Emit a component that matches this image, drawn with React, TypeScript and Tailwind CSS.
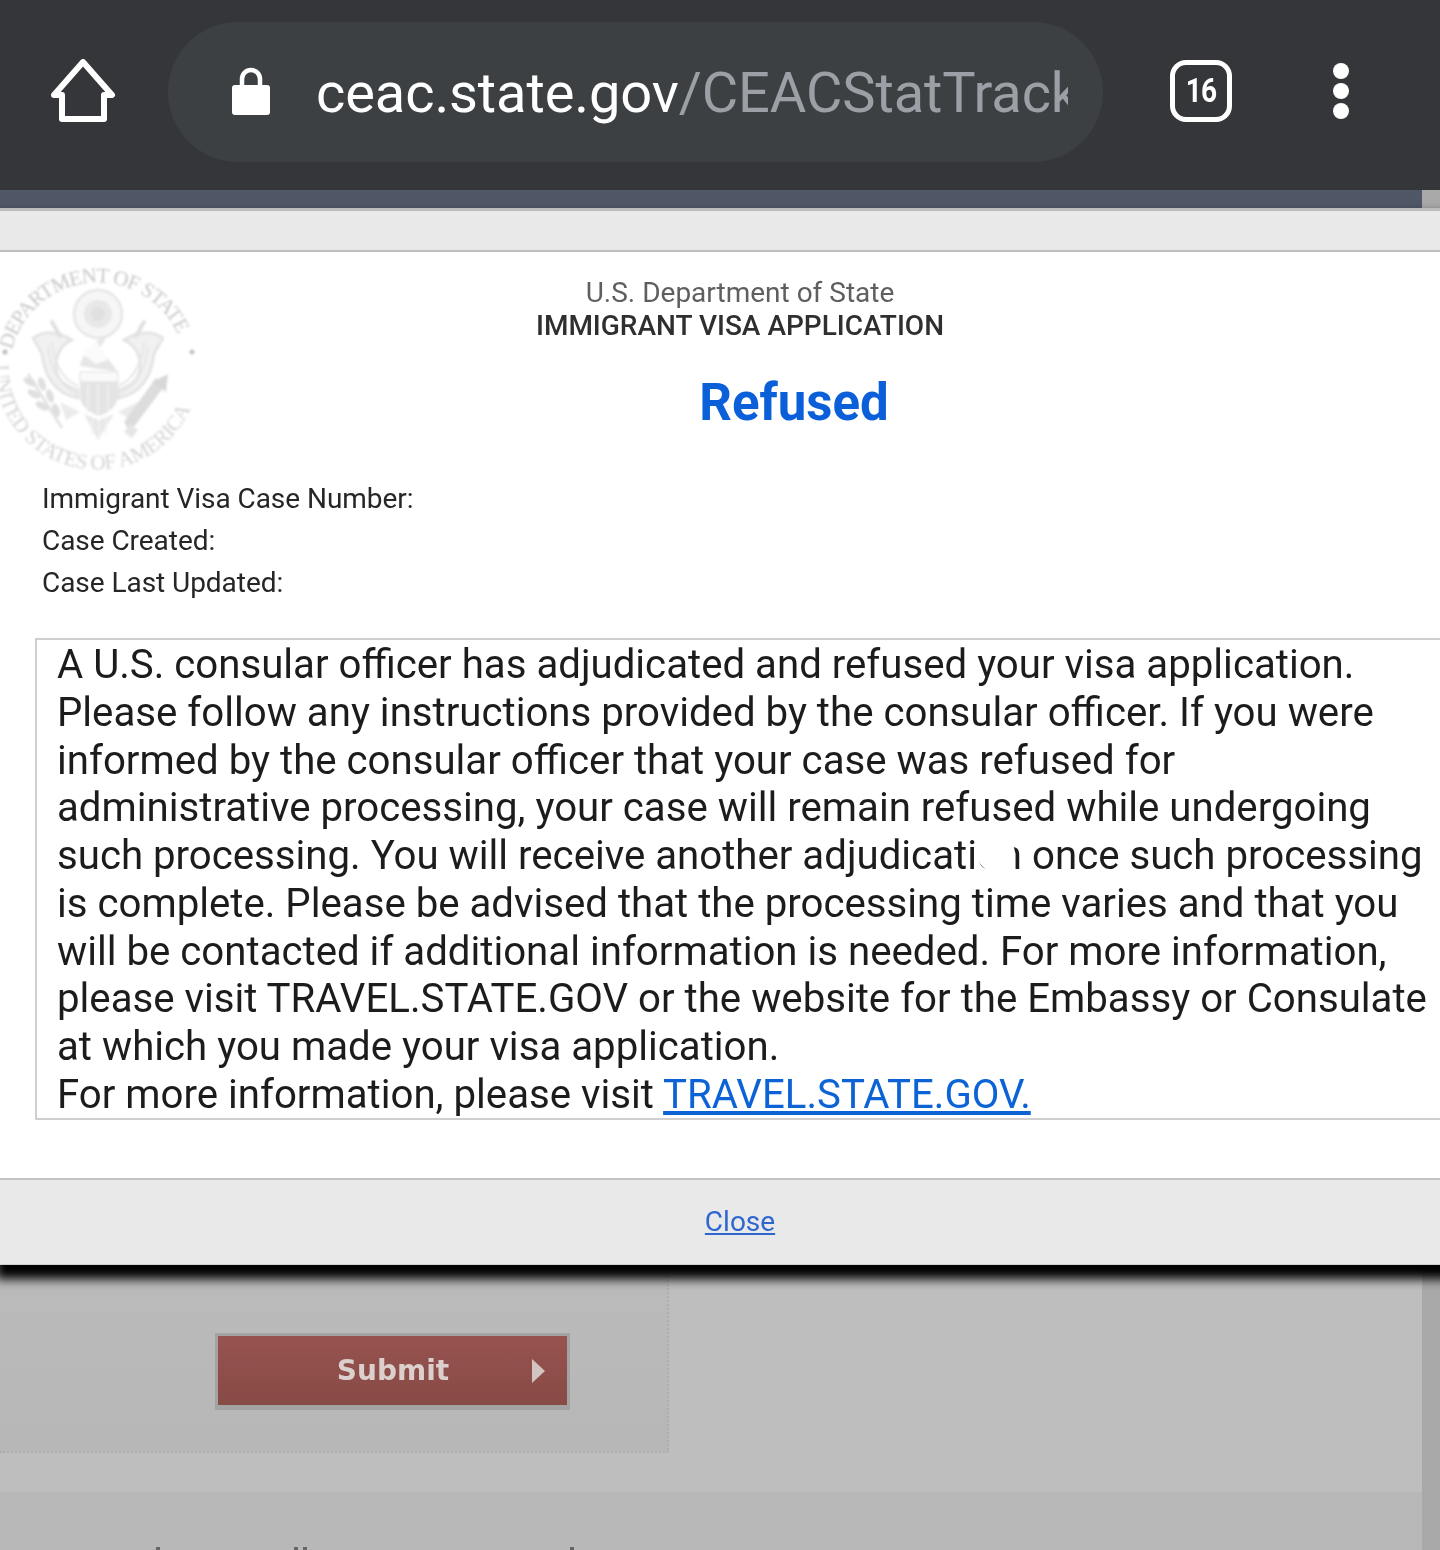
import React from "react";

const roboto = "font-['Roboto',sans-serif]";

function Seal() {
  return (
    <svg width="204" height="212" viewBox="0 0 204 212" className="blur-[0.8px]">
      <defs>
        <path id="topArc" d="M 12 88 A 88 88 0 0 1 184 92" fill="none" />
        <path id="botArc" d="M -5 103 A 102 102 0 0 0 199 108" fill="none" />
      </defs>
      <text fill="#c8c8c8" fontFamily="Liberation Serif" fontSize="21" letterSpacing="-1">
        <textPath href="#topArc">DEPARTMENT OF STATE</textPath>
      </text>
      <text fill="#d4d4d4" fontFamily="Liberation Serif" fontSize="21" letterSpacing="-0.4">
        <textPath href="#botArc">UNITED STATES OF AMERICA</textPath>
      </text>
      <circle cx="5" cy="90" r="2.5" fill="#bdbdbd" />
      <circle cx="192" cy="90" r="2.5" fill="#c4c4c4" />

      <circle cx="98" cy="52" r="24" fill="#f6f6f6" stroke="#e6e6e6" strokeWidth="2.5" />
      <circle cx="98" cy="52" r="14" fill="#e8e8e8" />
      <circle cx="98" cy="52" r="7" fill="#e0e0e0" />

      <path d="M33 76 C48 66 62 72 72 78 C62 82 56 92 56 104 C56 116 64 124 78 128 L78 136 C54 132 44 112 42 92 Z" fill="#f1f1f1" stroke="#e2e2e2" strokeWidth="2.5" />
      <path d="M163 76 C148 66 134 72 124 78 C134 82 140 92 140 104 C140 116 132 124 118 128 L118 136 C142 132 152 112 154 92 Z" fill="#f1f1f1" stroke="#e2e2e2" strokeWidth="2.5" />
      <path d="M48 84 C50 104 58 124 78 132 M52 80 C54 100 62 118 78 124" stroke="#e6e6e6" strokeWidth="2" fill="none" />
      <path d="M148 84 C146 104 138 124 118 132 M144 80 C142 100 134 118 118 124" stroke="#e6e6e6" strokeWidth="2" fill="none" />
      <path d="M52 60 L60 74 M144 60 L136 74" stroke="#e0e0e0" strokeWidth="4" strokeLinecap="round" />

      <path d="M80 104 C84 88 96 76 106 76 L100 86 L118 110 Z" fill="#e6e6e6" />
      <path d="M82 92 L96 78 L108 98 L96 102 Z" fill="#fbfbfb" />

      <rect x="80" y="110" width="38" height="10" fill="#fafafa" stroke="#dfdfdf" />
      <path d="M80 120 H118 V136 C116 146 106 152 99 154 C92 152 82 146 80 136 Z" fill="#e4e4e4" />
      <path d="M88 122 V150 M98 122 V154 M108 122 V150" stroke="#eeeeee" strokeWidth="2" />

      <path d="M84 152 L98 178 L114 152 L99 158 Z" fill="#e8e8e8" />
      <path d="M92 156 V172 M99 158 V178 M106 156 V172" stroke="#f2f2f2" strokeWidth="1.5" />

      <path d="M60 140 L80 150 L66 158 Z" fill="#ebebeb" />
      <path d="M138 140 L118 150 L132 158 Z" fill="#ebebeb" />

      <path d="M28 112 L62 166" stroke="#e4e4e4" strokeWidth="3" />
      <g fill="#dfdfdf">
        <ellipse cx="30" cy="120" rx="7" ry="3.5" transform="rotate(30 30 120)" />
        <ellipse cx="42" cy="122" rx="7" ry="3.5" transform="rotate(70 42 122)" />
        <ellipse cx="34" cy="132" rx="7" ry="3.5" transform="rotate(30 34 132)" />
        <ellipse cx="50" cy="134" rx="7" ry="3.5" transform="rotate(70 50 134)" />
        <ellipse cx="42" cy="144" rx="7" ry="3.5" transform="rotate(30 42 144)" />
        <ellipse cx="56" cy="148" rx="7" ry="3.5" transform="rotate(70 56 148)" />
      </g>
      <path d="M130 170 L166 122 L156 116 L124 160 Z" fill="#dcdcdc" />
      <path d="M168 112 L152 120 L166 130 Z" fill="#d8d8d8" />
      <path d="M138 168 L132 176 L124 170 L130 162 Z" fill="#e6e6e6" />
    </svg>
  );
}

function HomeIcon() {
  return (
    <svg width="66" height="66" viewBox="0 0 66 66" fill="none" stroke="#ffffff" strokeWidth="6" strokeLinejoin="round" strokeLinecap="round">
      <path d="M4 36 L33 3 L62 36 H54 V60 H12 V36 Z" />
    </svg>
  );
}

function LockIcon() {
  return (
    <svg width="38" height="50" viewBox="0 0 38 50" fill="#ffffff">
      <path d="M10 22 V13 a9 9 0 0 1 18 0 V22" fill="none" stroke="#ffffff" strokeWidth="4.5" />
      <rect x="0" y="19" width="38" height="30" rx="3" />
    </svg>
  );
}

export default function App() {
  return (
    <div className={`w-[1440px] h-[1550px] overflow-hidden flex flex-col bg-[#bebebe] ${roboto}`}>
      <header className="h-[190px] flex-none flex items-start bg-[#35363a] pt-[22px]">
        <div className="w-[168px] flex-none pl-[50px] pt-[37px]">
          <HomeIcon />
        </div>
        <div className="w-[935px] h-[140px] flex-none flex items-center rounded-[70px] bg-[#3c4043] pl-[64px] pr-[35px]">
          <div className="flex-none -mt-[2px]">
            <LockIcon />
          </div>
          <div className="ml-[46px] mt-[2px] min-w-0 overflow-hidden whitespace-nowrap text-[56px] leading-[70px] tracking-[-0.1px] blur-[0.4px]">
            <span className="text-white">ceac.state.gov</span>
            <span className="text-[#9aa0a6]">/CEACStatTrack</span>
          </div>
        </div>
        <div className="ml-[67px] mt-[38px] w-[62px] h-[62px] flex-none flex items-center justify-center rounded-[16px] border-[5px] border-white text-white blur-[0.3px]">
          <span className="font-bold text-[33px] tracking-[-1px] scale-x-[0.85]">16</span>
        </div>
        <div className="ml-[101px] mt-[41px] w-[16px] flex-none flex flex-col gap-[4px]">
          <span className="w-[16px] h-[16px] rounded-full bg-white" />
          <span className="w-[16px] h-[16px] rounded-full bg-white" />
          <span className="w-[16px] h-[16px] rounded-full bg-white" />
        </div>
      </header>

      <div className="h-[18px] flex-none flex bg-[#505868]">
        <div className="flex-1" />
        <div className="w-[18px] bg-[#a9a9a9]" />
      </div>

      <section className="relative z-10 w-[1480px] flex-none self-start flex flex-col bg-white shadow-[0_10px_10px_4px_#000000]">
        <div className="h-[44px] bg-[#e9e9e9] border-t-[3px] border-b-[2px] border-t-[#bdbdbd] border-b-[#bdbdbd]" />

        <div className="h-[926px] bg-white">
          <div className="flex h-[226px]">
            <div className="w-[204px] flex-none pt-[10px]">
              <Seal />
            </div>
            <div className="flex-1 -ml-[204px] text-center pt-[24px] blur-[0.3px]">
              <p className="text-[28px] leading-[33px] text-[#5f5f5f]">U.S. Department of State</p>
              <p className="text-[28px] leading-[33px] font-medium text-[#2f2f2f]">IMMIGRANT VISA APPLICATION</p>
              <p className="pl-[108px] mt-[33px] text-[51px] leading-[56px] font-bold text-[#0b5fd8]">Refused</p>
            </div>
          </div>

          <div className="pl-[42px] text-[28px] leading-[42px] tracking-[-0.05px] text-[#262626] blur-[0.3px]">
            <p>Immigrant Visa Case Number:</p>
            <p>Case Created:</p>
            <p>Case Last Updated:</p>
          </div>

          <div className="ml-[35px] mt-[34px] w-[1420px] h-[482px] border-2 border-[#cfcfcf] pl-[20px] pr-[21px] pt-[1px] text-[40.2px] leading-[47.75px] text-[#1c1c1c] blur-[0.3px]">
            <p>
              A U.S. consular officer has adjudicated and refused your visa application. Please follow any instructions provided by the consular officer. If you were informed by the consular officer that your case was refused for administrative processing, your case will remain refused while undergoing such processing. You will receive another adjudicati
              <span className="relative">
                on
                <span className="absolute left-[0px] top-[3px] w-[38px] h-[37px] rounded-full bg-white" />
              </span>{" "}
              once such processing is complete. Please be advised that the processing time varies and that you will be contacted if additional information is needed. For more information, please visit TRAVEL.STATE.GOV or the website for the Embassy or Consulate at which you made your visa application.
            </p>
            <p>
              For more information, please visit{" "}
              <a className="text-[#0b63d6] underline" href="#">TRAVEL.STATE.GOV.</a>
            </p>
          </div>
        </div>

        <footer className="h-[87px] flex items-center justify-center bg-[#e9e9e9] border-t-2 border-t-[#c2c2c2] border-b border-b-[#d0d0d0]">
          <a className="text-[28px] text-[#2f66d0] underline blur-[0.3px]" href="#">Close</a>
        </footer>
      </section>

      <div className="flex-1 flex min-h-0">
        <main className="flex-1 flex flex-col min-w-0">
          <div className="w-[669px] h-[188px] flex-none flex items-start pl-[215px] pt-[68px] bg-gradient-to-b from-[#bbbbbb] to-[#b7b7b7] border-r-2 border-b-2 border-dotted border-[#adadad]">
            <button className="relative w-[355px] h-[77px] flex items-center bg-gradient-to-b from-[#975350] to-[#874a45] border-[3px] border-b-[5px] border-[#a3a3a3] text-[#dcd0ce] font-['DejaVu_Sans',sans-serif] font-bold text-[28px] blur-[0.5px]">
              <span className="flex-1 text-center pl-[36px]">Submit</span>
              <svg width="13" height="24" viewBox="0 0 13 24" className="mr-[22px] flex-none"><path d="M0 0 L13 12 L0 24 Z" fill="#d2c4c0" /></svg>
            </button>
          </div>
          <div className="h-[39px] flex-none" />
          <div className="relative flex-1 bg-[#b8b8b8] blur-[0.4px]">
            <span className="absolute bottom-0 left-[156px] w-[4px] h-[3px] bg-[#666666]" />
            <span className="absolute bottom-0 left-[294px] w-[4px] h-[3px] bg-[#666666]" />
            <span className="absolute bottom-0 left-[303px] w-[4px] h-[3px] bg-[#666666]" />
            <span className="absolute bottom-0 left-[570px] w-[4px] h-[3px] bg-[#666666]" />
          </div>
        </main>
        <aside className="w-[18px] flex-none bg-[#a9a9a9]" />
      </div>
    </div>
  );
}
